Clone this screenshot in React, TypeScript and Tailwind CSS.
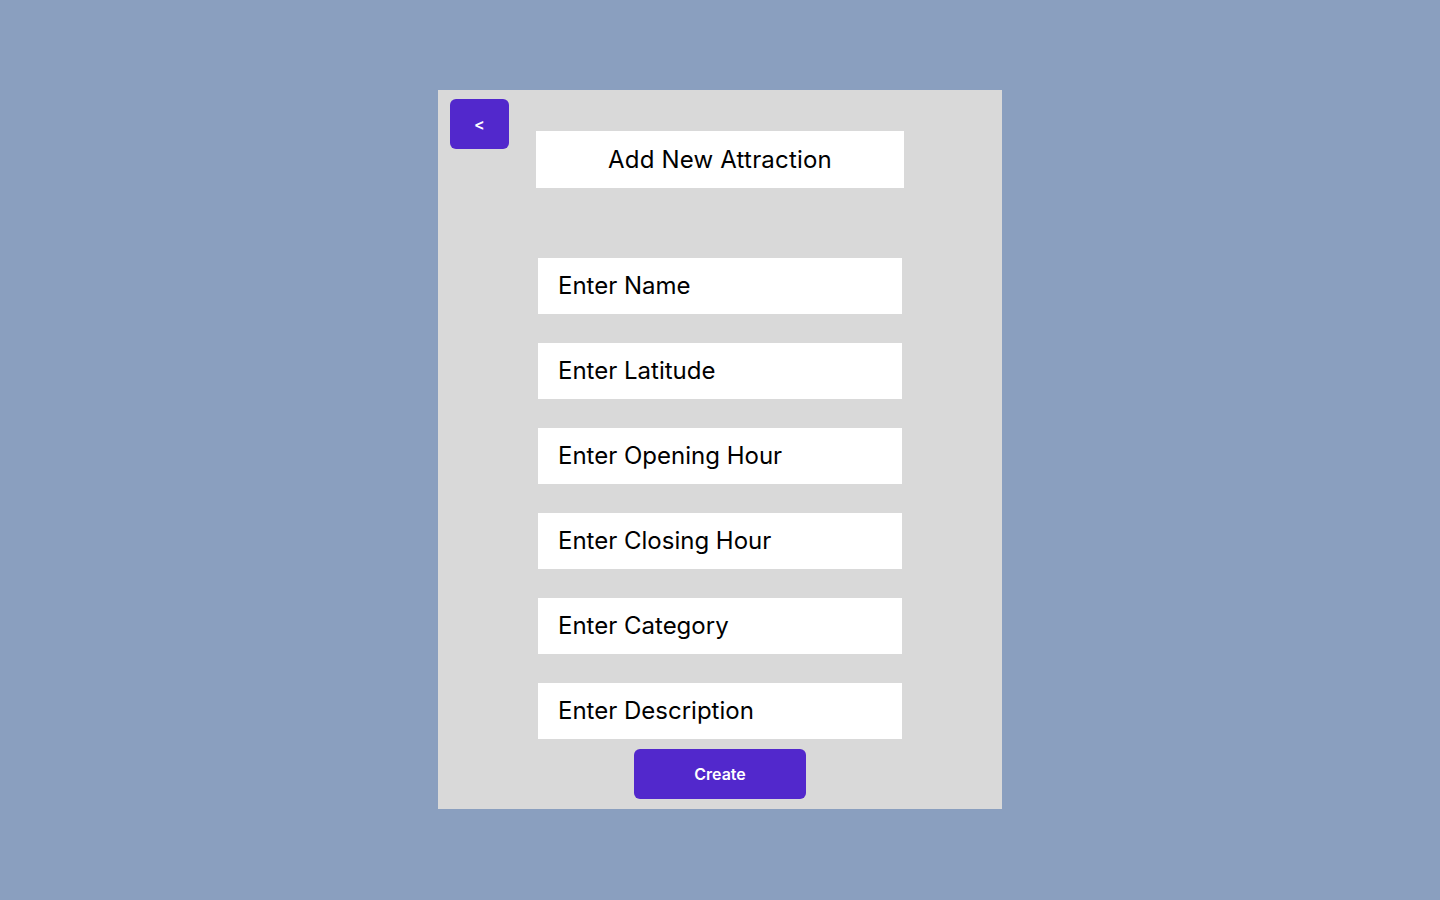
import React from 'react';

const fields = [
  'Enter Name',
  'Enter Latitude',
  'Enter Opening Hour',
  'Enter Closing Hour',
  'Enter Category',
  'Enter Description',
];

export default function App() {
  return (
    <div
      className="min-h-screen w-full bg-[#8a9fbf] flex justify-center pt-[90px]"
      style={{ fontFamily: 'Inter, "Noto Sans", sans-serif' }}
    >
      <div className="relative w-[564px] h-[719px] bg-[#d9d9d9] flex flex-col items-center pt-[41px]">
        <button className="absolute left-3 top-[9px] w-[59px] h-[50px] rounded-md bg-[#5228cc] text-white text-base font-semibold">
          &lt;
        </button>

        <div className="w-[368px] h-[57px] bg-white flex items-center justify-center text-2xl tracking-[0.2px] text-black">
          Add New Attraction
        </div>

        <div className="mt-[70px] flex flex-col gap-[29px]">
          {fields.map((f) => (
            <input
              key={f}
              placeholder={f}
              className="w-[364px] h-[56px] bg-white px-5 pb-[2px] text-2xl text-black placeholder:text-black outline-none"
            />
          ))}
        </div>

        <button className="mt-[10px] w-[172px] h-[50px] rounded-md bg-[#5228cc] text-white text-base font-semibold">
          Create
        </button>
      </div>
    </div>
  );
}
